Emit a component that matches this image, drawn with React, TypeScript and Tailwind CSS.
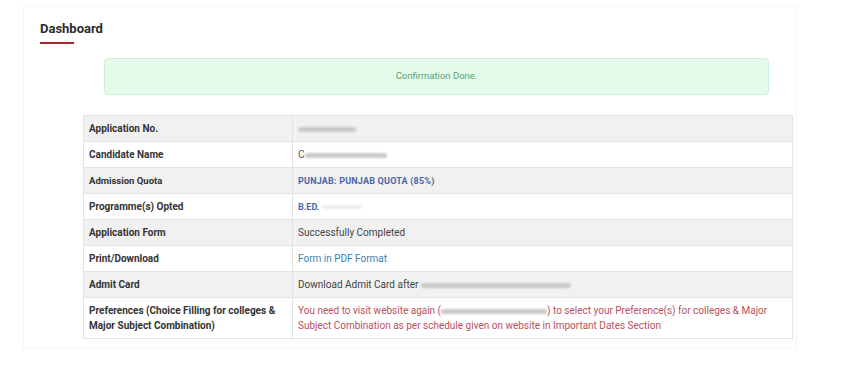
import React from 'react';

const FONT = { fontFamily: 'Roboto, "Open Sans", Arial, sans-serif' };

function Blur({ w }: { w: number }) {
  return <span className="inline-block align-middle h-[5px] rounded-full bg-[#c9c9c9] blur-[1px]" style={{ width: w }} />;
}

type Row = { label: React.ReactNode; value: React.ReactNode; small?: boolean; tall?: boolean };

const ROWS: Row[] = [
  { label: 'Application No.', value: <Blur w={58} /> },
  { label: 'Candidate Name', value: <span className="text-[#555]">C<Blur w={82} /></span> },
  { label: 'Admission Quota', small: true, value: <span className="font-bold text-[9px] text-[#4a67a8] tracking-[0.2px]">PUNJAB: PUNJAB QUOTA (85%)</span> },
  { label: 'Programme(s) Opted', value: <span className="font-bold text-[9px] text-[#4a67a8]">B.ED. <span className="inline-block align-middle h-[4px] w-[40px] rounded-full bg-[#ececec] blur-[1px]" /></span> },
  { label: 'Application Form', value: <span className="text-[#444]">Successfully Completed</span> },
  { label: 'Print/Download', value: <span className="text-[#3d7fb5]">Form in PDF Format</span> },
  { label: 'Admit Card', value: <span className="text-[#444]">Download Admit Card after <Blur w={150} /></span> },
  {
    label: <>Preferences (Choice Filling for colleges &amp;<br />Major Subject Combination)</>,
    tall: true,
    value: (
      <span className="text-[#b5525c]">
        You need to visit website again (<Blur w={106} />) to select your Preference(s) for colleges &amp; Major
        <br />
        Subject Combination as per schedule given on website in Important Dates Section
      </span>
    ),
  },
];

export default function App() {
  return (
    <div className="w-[848px] h-[369px] bg-white pt-[6px] pl-[23px]" style={FONT}>
      <div className="w-[774px] h-[343px] border border-[#f5f5f5] bg-white">
        <div className="pl-[16px] pt-[14px]">
          <h1 className="text-[13px] leading-[16px] font-bold text-[#2b2b2b]">Dashboard</h1>
          <div className="mt-[5px] w-[34px] h-[2px] bg-[#a8242c]" />
        </div>
        <div className="ml-[80px] mt-[14px] w-[665px] h-[37px] rounded-[4px] border border-[#cfeed9] bg-[#e4fbeb] flex items-center justify-center">
          <span className="text-[9.5px] text-[#5aa36f]">Confirmation Done.</span>
        </div>
        <table className="ml-[59px] mt-[20px] w-[710px] border-collapse text-[10px] leading-[15px]">
          <tbody>
            {ROWS.map((r, i) => (
              <tr key={i} className={i % 2 === 0 ? 'bg-[#f1f1f1]' : 'bg-white'}>
                <td className={`w-[209px] border border-[#e3e3e3] px-[5px] font-bold text-[#333] ${r.tall ? 'h-[41px]' : 'h-[26px]'} ${r.small ? 'text-[9.5px]' : ''}`}>
                  {r.label}
                </td>
                <td className="border border-[#e3e3e3] px-[5px]">{r.value}</td>
              </tr>
            ))}
          </tbody>
        </table>
      </div>
    </div>
  );
}
